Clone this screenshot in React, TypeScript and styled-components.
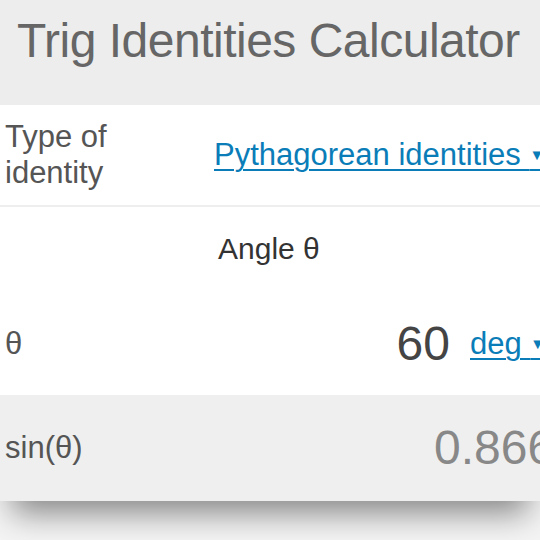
import styled, { createGlobalStyle } from "styled-components";

const GlobalStyle = createGlobalStyle`
  html, body {
    margin: 0;
    padding: 0;
    background: #f4f4f4;
  }
  body {
    font-family: "Liberation Sans", Arial, Helvetica, sans-serif;
  }
`;

const Page = styled.main`
  width: 540px;
  height: 540px;
  overflow: hidden;
`;

const Header = styled.header`
  height: 105px;
  box-sizing: border-box;
  padding: 17px 0 0 17px;
  background: #ededed;
`;

const Title = styled.h1`
  margin: 0;
  font-size: 48px;
  font-weight: 400;
  letter-spacing: -0.5px;
  line-height: 1;
  color: #666;
  white-space: nowrap;
`;

const Card = styled.section`
  background: #fff;
  box-shadow: 0 24px 30px -12px rgba(0, 0, 0, 0.45);
`;

const Row = styled.div<{ $height: number; $grey?: boolean; $divider?: boolean }>`
  display: grid;
  grid-template-columns: 214px 1fr;
  align-items: center;
  height: ${(p) => p.$height}px;
  background: ${(p) => (p.$grey ? "#efefef" : "#fff")};
  border-bottom: ${(p) => (p.$divider ? "2px solid #eeeeee" : "none")};
  white-space: nowrap;
`;

const Group = styled.div`
  padding: 24px 0 16px;
  background: #fff;
`;

const GroupTitle = styled.div`
  margin: 0 0 42px 218px;
  font-size: 30px;
  line-height: 36px;
  color: #333;
`;

const Label = styled.div`
  padding-left: 5px;
  font-size: 31px;
  line-height: 36px;
  color: #555;
`;

const SelectLink = styled.a`
  color: #0a7db8;
  font-size: 31px;
  line-height: 36px;
  text-decoration: underline;
  text-decoration-thickness: 2px;
  text-underline-offset: 4px;
  cursor: pointer;
`;

const Caret = styled.span`
  font-size: 15px;
  vertical-align: 5px;
`;

const Field = styled.div`
  display: flex;
  align-items: center;
`;

const NumberValue = styled.div`
  width: 236px;
  text-align: right;
  font-size: 48px;
  line-height: 1;
  color: #444;
`;

const UnitLink = styled(SelectLink)`
  margin-left: 20px;
`;

const ResultValue = styled.div`
  margin-left: 220px;
  font-size: 48px;
  line-height: 1;
  color: #888;
`;

export default function App() {
  return (
    <Page>
      <GlobalStyle />
      <Header>
        <Title>Trig Identities Calculator</Title>
      </Header>
      <Card>
        <Row $height={100} $divider>
          <Label>
            Type of
            <br />
            identity
          </Label>
          <div>
            <SelectLink>
              Pythagorean identities <Caret>▼</Caret>
            </SelectLink>
          </div>
        </Row>
        <Group>
          <GroupTitle>Angle θ</GroupTitle>
          <Row $height={70}>
            <Label>θ</Label>
            <Field>
              <NumberValue>60</NumberValue>
              <UnitLink>
                deg <Caret>▼</Caret>
              </UnitLink>
            </Field>
          </Row>
        </Group>
        <Row $height={106} $grey>
          <Label>sin(θ)</Label>
          <ResultValue>0.866</ResultValue>
        </Row>
      </Card>
    </Page>
  );
}
